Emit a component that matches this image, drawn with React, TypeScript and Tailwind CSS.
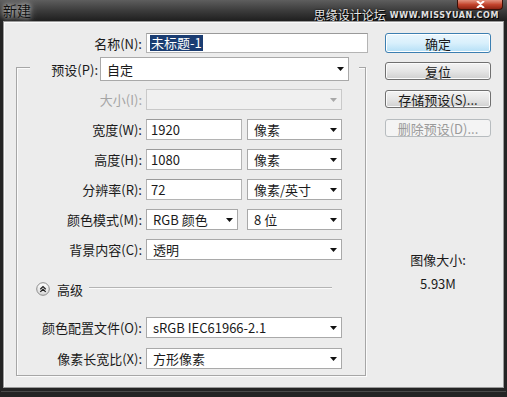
import React from 'react';

const Caret = ({ disabled = false }: { disabled?: boolean }) => (
  <svg width="7" height="4" viewBox="0 0 7 4" className="shrink-0">
    <path d="M0 0h7L3.5 4z" fill={disabled ? '#a8a8a8' : '#111'} />
  </svg>
);

const TextBox = ({ value, width, selected = false }: { value: string; width: string; selected?: boolean }) => (
  <div className={`${width} h-full flex items-center bg-white border border-[#b4b4b4] border-t-[#9a9a9a] pl-[3px]`}>
    {selected ? <span className="bg-[#1b3d72] text-white leading-[16px] px-[1px]">{value}</span> : <span className="pl-[1px]">{value}</span>}
  </div>
);

const Select = ({ value, width, disabled = false, className = '' }: { value?: string; width: string; disabled?: boolean; className?: string }) => (
  <div
    className={`${width} h-full flex items-center justify-between pl-[6px] pr-[4px] border ${
      disabled ? 'bg-[#f0f0f0] border-[#c9c9c9]' : 'bg-white border-[#a9a9a9]'
    } ${className}`}
  >
    <span>{value}</span>
    <Caret disabled={disabled} />
  </div>
);

const Row = ({ label, children, disabled = false, className = '' }: { label: string; children: React.ReactNode; disabled?: boolean; className?: string }) => (
  <div className={`flex items-center h-[21px] ${className}`}>
    <div className={`w-[129px] text-right pr-[4px] ${disabled ? 'text-[#a5a5a5]' : ''}`}>{label}</div>
    <div className="flex h-full gap-[5px]">{children}</div>
  </div>
);

const Button = ({ label, kind = 'normal', className = '' }: { label: string; kind?: 'default' | 'normal' | 'disabled'; className?: string }) => {
  const look =
    kind === 'default'
      ? 'border-[#3c7fb1] bg-linear-to-b from-[#eaf6fd] via-[#d9f0fc] to-[#b4dff6] shadow-[inset_0_0_0_1px_#ffffff]'
      : kind === 'disabled'
      ? 'border-[#b7bcbf] bg-[#f4f4f4] text-[#9a9a9a]'
      : 'border-[#707070] bg-linear-to-b from-[#f3f3f3] via-[#e6e6e6] to-[#d0d0d0] shadow-[inset_0_0_0_1px_#fbfbfb]';
  return (
    <div className={`w-[106px] flex items-center justify-center rounded-[3px] border ${look} ${className}`}>{label}</div>
  );
};

const AdvancedIcon = () => (
  <svg width="14" height="14" viewBox="0 0 14 14" className="shrink-0">
    <defs>
      <linearGradient id="adv" x1="0" y1="0" x2="0" y2="1">
        <stop offset="0" stopColor="#ffffff" />
        <stop offset="1" stopColor="#d6d6d6" />
      </linearGradient>
    </defs>
    <circle cx="7" cy="7" r="6.3" fill="url(#adv)" stroke="#8c8c8c" strokeWidth="1" />
    <path d="M4.3 7.2L7 4.6l2.7 2.6M4.3 9.9L7 7.3l2.7 2.6" fill="none" stroke="#222" strokeWidth="1.3" />
  </svg>
);

export default function App() {
  return (
    <div className="w-[507px] h-[397px] bg-[#242424] flex flex-col overflow-hidden font-['Noto_Sans_CJK_SC',sans-serif] text-[13px] text-[#1a1a1a] leading-none">
      {/* title bar */}
      <div className="h-[21px] shrink-0 flex items-start bg-linear-to-b from-[#5e5e5e] via-[#3c3c3c] to-[#1f1f1f]">
        <div className="pl-[3px] pt-[3px] text-[14px] text-[#111] [text-shadow:0_0_4px_#d0d0d0,0_0_8px_#bdbdbd]">新建</div>
        <div className="ml-auto flex flex-col items-end">
          <div className="mr-[4px] w-[46px] h-[10px] rounded-b-[4px] border border-t-0 border-[#3a1008] bg-linear-to-b from-[#e39380] via-[#c4452e] to-[#8e2312] flex items-end justify-center pb-[1px]">
            <svg width="9" height="7" viewBox="0 0 9 7">
              <path d="M1 0l3.5 3L8 0M1 7l3.5-3L8 7" fill="none" stroke="#fff" strokeWidth="2" />
            </svg>
          </div>
          <div className="flex items-end mr-[8px] -mt-[1px] gap-[4px]">
            <span className="text-[12px] text-[#e6e6e6] [text-shadow:0_0_2px_#000,1px_1px_0_#000]">思缘设计论坛</span>
            <span className="text-[8px] font-bold tracking-[0.6px] text-[#e0e0e0] font-['DejaVu_Sans',sans-serif] pb-[1px] [text-shadow:1px_1px_0_#000]">
              WWW.MISSYUAN.COM
            </span>
          </div>
        </div>
      </div>

      {/* dialog body */}
      <div className="mx-[3px] h-[367px] shrink-0 border border-[#9a9a9a] bg-[#ececec] shadow-[inset_1px_1px_0_#fafafa] flex">
        {/* left column */}
        <div className="w-[364px] pl-[12px] flex flex-col">
          <div className="flex items-center h-[20px] mt-[11px]">
            <div className="w-[130px] text-right pr-[4px]">名称(N):</div>
            <TextBox value="未标题-1" width="w-[222px]" selected />
          </div>

          <div className="mt-[14px] w-[350px] h-[309px] border border-[#a6a6a6] shadow-[inset_1px_1px_0_#fbfbfb,1px_1px_0_#fbfbfb] flex flex-col">
            <div className="-mt-[11px] ml-[13px] w-[329px] h-[24px] bg-[#ececec] flex items-center pr-[8px]">
              <div className="w-[70px] text-right pr-[2px]">预设(P):</div>
              <Select value="自定" width="w-[249px]" />
            </div>

            <Row label="大小(I):" disabled className="mt-[8px]">
              <Select width="w-[196px]" disabled />
            </Row>
            <Row label="宽度(W):" className="mt-[9px]">
              <TextBox value="1920" width="w-[96px]" />
              <Select value="像素" width="w-[95px]" />
            </Row>
            <Row label="高度(H):" className="mt-[9px]">
              <TextBox value="1080" width="w-[96px]" />
              <Select value="像素" width="w-[95px]" />
            </Row>
            <Row label="分辨率(R):" className="mt-[9px]">
              <TextBox value="72" width="w-[96px]" />
              <Select value="像素/英寸" width="w-[95px]" />
            </Row>
            <Row label="颜色模式(M):" className="mt-[9px]">
              <Select value="RGB 颜色" width="w-[92px]" />
              <Select value="8 位" width="w-[95px]" className="ml-[4px]" />
            </Row>
            <Row label="背景内容(C):" className="mt-[9px]">
              <Select value="透明" width="w-[196px]" />
            </Row>

            <div className="mt-[21px] h-[16px] flex items-center pl-[19px] pr-[33px]">
              <AdvancedIcon />
              <span className="ml-[7px]">高级</span>
              <div className="ml-[6px] flex-1 h-[2px] -mt-[2px] border-t border-[#b4b4b4] border-b border-b-[#fbfbfb]" />
            </div>

            <Row label="颜色配置文件(O):" className="mt-[20px]">
              <Select value="sRGB IEC61966-2.1" width="w-[196px]" />
            </Row>
            <Row label="像素长宽比(X):" className="mt-[10px]">
              <Select value="方形像素" width="w-[196px]" />
            </Row>
          </div>
        </div>

        {/* right column */}
        <div className="ml-[17px] flex flex-col">
          <Button label="确定" kind="default" className="mt-[11px] h-[20px]" />
          <Button label="复位" className="mt-[9px] h-[18px]" />
          <Button label="存储预设(S)..." className="mt-[10px] h-[18px]" />
          <Button label="删除预设(D)..." kind="disabled" className="mt-[11px] h-[18px]" />
          <div className="w-[106px] mt-[116px] text-center">图像大小:</div>
          <div className="w-[106px] mt-[11px] text-center">5.93M</div>
        </div>
      </div>

      {/* bottom frame */}
      <div className="flex-1 mx-[1px] mt-[3px] border-t border-[#4a4a4a]" />
    </div>
  );
}
